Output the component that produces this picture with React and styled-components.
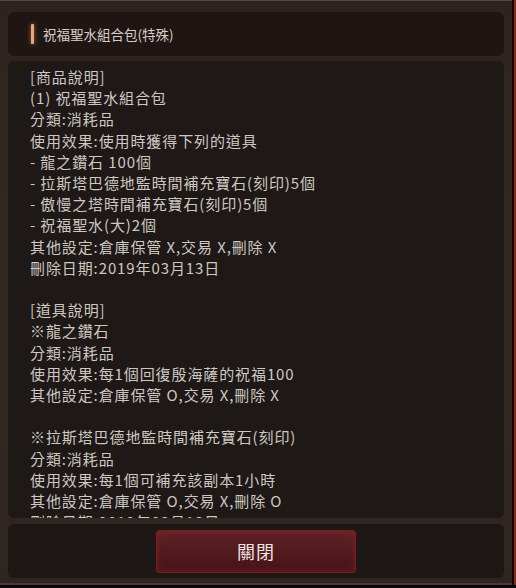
import styled, { createGlobalStyle } from 'styled-components'

const GlobalStyle = createGlobalStyle`
    html, body {
        margin: 0;
        padding: 0;
        background: #0b0908;
    }
    #root {
        width: 516px;
        height: 588px;
    }
`

const lines = [
    '[商品說明]',
    '(1) 祝福聖水組合包',
    '分類:消耗品',
    '使用效果:使用時獲得下列的道具',
    '- 龍之鑽石 100個',
    '- 拉斯塔巴德地監時間補充寶石(刻印)5個',
    '- 傲慢之塔時間補充寶石(刻印)5個',
    '- 祝福聖水(大)2個',
    '其他設定:倉庫保管 X,交易 X,刪除 X',
    '刪除日期:2019年03月13日',
    '',
    '[道具說明]',
    '※龍之鑽石',
    '分類:消耗品',
    '使用效果:每1個回復殷海薩的祝福100',
    '其他設定:倉庫保管 O,交易 X,刪除 X',
    '',
    '※拉斯塔巴德地監時間補充寶石(刻印)',
    '分類:消耗品',
    '使用效果:每1個可補充該副本1小時',
    '其他設定:倉庫保管 O,交易 X,刪除 O',
    '刪除日期:2019年03月13日',
]

function App() {
    return (
        <>
            <GlobalStyle />
            <Window>
                <TitlePanel>
                    <Accent />
                    <Title>祝福聖水組合包(特殊)</Title>
                </TitlePanel>
                <ContentPanel>
                    {lines.map((line, i) => (
                        <Line key={i}>{line || '\u00a0'}</Line>
                    ))}
                </ContentPanel>
                <FooterPanel>
                    <CloseButton>關閉</CloseButton>
                </FooterPanel>
            </Window>
        </>
    )
}

const Window = styled.div`
    box-sizing: border-box;
    width: 512px;
    height: 585px;
    padding: 11px 8px 7px 8px;
    display: flex;
    flex-direction: column;
    gap: 5px;
    background: linear-gradient(180deg, #2e231e 0%, #342822 50%, #2f2520 100%);
    border-top: 1px solid #5a4a3e;
    border-bottom: 2px solid #4a3c32;
    box-shadow: 2px 0 0 #0c0807, 4px 0 0 #8a2a12;
    font-family: 'Noto Sans CJK TC', 'Noto Sans', sans-serif;
`

const Panel = styled.div`
    box-sizing: border-box;
    background: #1e1715;
    border-radius: 6px;
`

const TitlePanel = styled(Panel)`
    height: 44px;
    flex: none;
    display: flex;
    align-items: center;
    padding-left: 23px;
    gap: 9px;
    background: #1f1614;
`

const Accent = styled.div`
    width: 3px;
    height: 20px;
    background: #eaa57f;
    border-radius: 1px;
    box-shadow: 0 0 4px rgba(230, 140, 90, 0.7);
`

const Title = styled.span`
    color: #d6cec6;
    font-size: 13.5px;
`

const ContentPanel = styled(Panel)`
    flex: none;
    height: 457px;
    overflow: hidden;
    padding: 5px 22px 0 22px;
    background: #1e1816;
`

const Line = styled.div`
    color: #cdc8c1;
    font-size: 15px;
    line-height: 21.2px;
    white-space: nowrap;
    letter-spacing: 0.9px;
`

const FooterPanel = styled(Panel)`
    flex: none;
    height: 54px;
    margin-top: 1px;
    display: flex;
    align-items: center;
    justify-content: center;
    background: #1d1715;
`

const CloseButton = styled.button`
    width: 200px;
    height: 43px;
    border: 1px solid #7a1c1c;
    border-radius: 3px;
    background: linear-gradient(180deg, #5e2225 0%, #50191c 60%, #45141a 100%);
    box-shadow: inset 0 0 6px rgba(200, 50, 50, 0.35);
    color: #ece4e0;
    font-family: 'Noto Sans CJK TC', 'Noto Sans', sans-serif;
    font-size: 18px;
    letter-spacing: 1px;
    cursor: pointer;
`

export default App
